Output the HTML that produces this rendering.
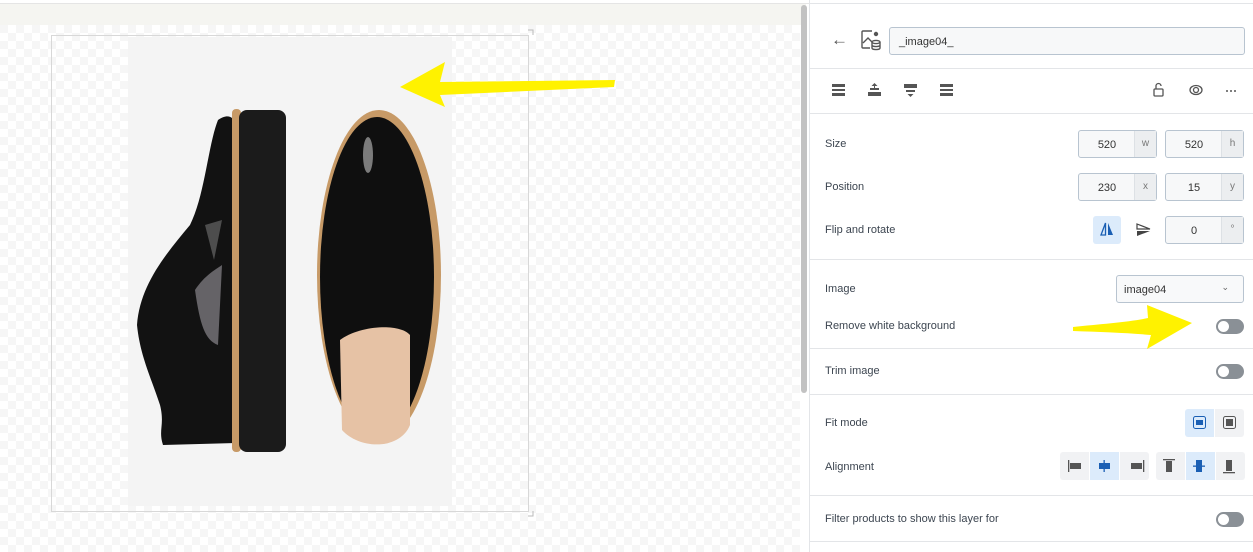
<!DOCTYPE html>
<html><head><meta charset="utf-8"><style>
*{box-sizing:border-box;margin:0;padding:0}
body{width:1253px;height:552px;overflow:hidden;background:#fff;font-family:"Liberation Sans",sans-serif;position:relative;color:#3c4550}
.abs{position:absolute}
.lbl{position:absolute;left:825px;font-size:11px;color:#3c4550}
.hr{position:absolute;left:810px;width:443px;height:1px;background:#e3e5e8}
.inp{position:absolute;height:28px;border:1px solid #b8c4d0;border-radius:3px;background:#f7f8f9;font-size:11px;color:#333}
.inp .v{position:absolute;top:8px;text-align:center}
.inp .u{position:absolute;right:0;top:0;height:26px;width:22px;background:#eceef0;border-left:1px solid #dde1e5;font-size:10px;color:#777;text-align:center;padding-top:8px;line-height:10px}
.tog{position:absolute;left:1216px;width:28px;height:15px;border-radius:8px;background:#8a9096}
.tog:after{content:"";position:absolute;left:2px;top:2px;width:11px;height:11px;border-radius:50%;background:#fff}
.btn{position:absolute;width:29px;height:28px;background:#f1f2f4}
.btn.on{background:#dcebfb}
</style></head><body>
<div class="abs" style="left:0;top:3px;width:809px;height:1px;background:#e5e5e5"></div>
<div class="abs" style="left:0;top:4px;width:806px;height:21px;background:#f5f5f1"></div>
<svg class="abs" style="left:0;top:25px" width="800" height="527">
<defs><pattern id="ck" width="16" height="16" patternUnits="userSpaceOnUse"><rect width="16" height="16" fill="#fff"/><rect width="8" height="8" fill="#f6f6f6"/><rect x="8" y="8" width="8" height="8" fill="#f6f6f6"/></pattern></defs>
<rect width="800" height="527" fill="url(#ck)"/>
<rect x="51.5" y="10.5" width="477" height="476" fill="none" stroke="#d8d8d8"/>
<path d="M528 5h5v5M528 491h5v-5" fill="none" stroke="#bbb"/>
<rect x="128" y="12" width="324" height="469" fill="#f4f4f4"/>
<!-- left shoe -->
<path d="M218 95 C228 88 234 92 236 100 L236 418 L163 420 C158 405 165 400 160 380 C150 350 140 330 137 300 C140 260 165 230 190 200 C205 170 208 120 218 95Z" fill="#121212"/>
<path d="M195 265 C205 250 215 245 222 240 L218 320 C205 315 200 300 195 265Z" fill="#9c9aa0" opacity=".6"/>
<path d="M205 200 L222 195 L214 235Z" fill="#888" opacity=".5"/>
<rect x="232" y="84" width="9" height="343" rx="4" fill="#c79a67"/>
<rect x="239" y="85" width="47" height="342" rx="8" fill="#1b1b1b"/>
<!-- right shoe -->
<ellipse cx="379" cy="250" rx="62" ry="165" fill="#c79a67"/>
<ellipse cx="377" cy="252" rx="57" ry="160" fill="#0f0f0f"/>
<path d="M340 315 C360 300 400 298 410 310 L410 400 C400 425 360 425 342 405Z" fill="#e6c2a5"/>
<ellipse cx="368" cy="130" rx="5" ry="18" fill="#aaa" opacity=".7"/>
<path d="M400 62 L445 37 L440 57 L615 55 L614 62 L440 70 L445 82Z" fill="#fff200"/>
</svg>
<div class="abs" style="left:801px;top:5px;width:6px;height:388px;background:#c2c2c2;border-radius:3px"></div>
<div class="abs" style="left:809px;top:0;width:1px;height:552px;background:#e3e5e8"></div>
<div class="hr" style="top:3px"></div>
<div class="abs" style="left:831px;top:30px;font-size:17px;color:#555">←</div>
<svg class="abs" style="left:860px;top:29px" width="22" height="22" fill="none" stroke="#555" stroke-width="1.4"><path d="M12 2H3a1 1 0 0 0-1 1v15a1 1 0 0 0 1 1h7"/><path d="M3 14l5-5 4 4"/><circle cx="16" cy="5" r="1.5" fill="#555"/><ellipse cx="16" cy="13" rx="4" ry="1.6"/><path d="M12 13v6c0 1 2 1.6 4 1.6s4-.6 4-1.6v-6M12 16c0 1 2 1.6 4 1.6s4-.6 4-1.6"/></svg>
<div class="inp" style="left:889px;top:27px;width:356px"><span class="v" style="left:9px">_image04_</span></div>
<div class="hr" style="top:68px"></div>
<svg class="abs" style="left:832px;top:83px" width="130" height="14" fill="#555"><rect x="0" y="1" width="13" height="3"/><rect x="0" y="6" width="13" height="2"/><rect x="0" y="10" width="13" height="3"/>
<g transform="translate(36,0)"><rect x="0" y="9" width="13" height="4"/><rect x="2" y="5" width="9" height="2"/><path d="M6.5 0l-3 3h6z"/><rect x="6" y="2" width="1" height="5"/></g>
<g transform="translate(72,0)"><rect x="0" y="1" width="13" height="4"/><rect x="2" y="7" width="9" height="2"/><path d="M6.5 14l-3-3h6z"/></g>
<g transform="translate(108,0)"><rect x="0" y="1" width="13" height="3"/><rect x="0" y="6" width="13" height="2"/><rect x="0" y="10" width="13" height="3"/></g></svg>
<svg class="abs" style="left:1152px;top:82px" width="90" height="16" fill="none" stroke="#555" stroke-width="1.3"><rect x="2" y="7" width="9" height="7" rx="1"/><path d="M4 7V4a2.5 2.5 0 0 1 5 0"/><ellipse cx="44" cy="8" rx="6" ry="4.5"/><circle cx="44" cy="8" r="2.5"/><g fill="#555" stroke="none"><circle cx="75" cy="9" r="1"/><circle cx="79" cy="9" r="1"/><circle cx="83" cy="9" r="1"/></g></svg>
<div class="hr" style="top:113px"></div>
<div class="lbl" style="top:138px">Size</div>
<div class="inp" style="left:1078px;top:130px;width:79px"><span class="v" style="left:0;width:56px">520</span><span class="u">w</span></div>
<div class="inp" style="left:1165px;top:130px;width:79px"><span class="v" style="left:0;width:56px">520</span><span class="u">h</span></div>
<div class="lbl" style="top:181px">Position</div>
<div class="inp" style="left:1078px;top:173px;width:79px"><span class="v" style="left:0;width:56px">230</span><span class="u">x</span></div>
<div class="inp" style="left:1165px;top:173px;width:79px"><span class="v" style="left:0;width:56px">15</span><span class="u">y</span></div>
<div class="lbl" style="top:224px">Flip and rotate</div>
<div class="btn on" style="left:1093px;top:216px;width:28px;border-radius:3px"></div>
<svg class="abs" style="left:1099px;top:221px" width="16" height="16"><path d="M6.5 2L2 14h4.5z" fill="none" stroke="#1a5fb4" stroke-width="1.3"/><path d="M9 2l5 12H9z" fill="#1a5fb4"/></svg>
<svg class="abs" style="left:1136px;top:223px" width="16" height="14"><path d="M1 1l13 5H1z" fill="none" stroke="#444" stroke-width="1.2"/><path d="M1 8h13L1 13z" fill="#444"/></svg>
<div class="inp" style="left:1165px;top:216px;width:79px"><span class="v" style="left:0;width:56px">0</span><span class="u">°</span></div>
<div class="hr" style="top:259px"></div>
<div class="lbl" style="top:283px">Image</div>
<div class="inp" style="left:1116px;top:275px;width:128px;background:#f8f9fa"><span class="v" style="left:7px">image04</span><span class="abs" style="right:14px;top:6px;font-size:9px;color:#666">⌄</span></div>
<div class="lbl" style="top:320px">Remove white background</div>
<div class="tog" style="top:319px"></div>
<div class="hr" style="top:348px"></div>
<div class="lbl" style="top:365px">Trim image</div>
<div class="tog" style="top:364px"></div>
<div class="hr" style="top:394px"></div>
<div class="lbl" style="top:417px">Fit mode</div>
<div class="btn on" style="left:1185px;top:409px;border-radius:3px 0 0 3px"></div>
<div class="btn" style="left:1215px;top:409px;border-radius:0 3px 3px 0"></div>
<svg class="abs" style="left:1185px;top:409px" width="60" height="28"><rect x="8.5" y="7.5" width="12" height="12" rx="2" fill="none" stroke="#1a5fb4"/><rect x="11" y="11" width="7" height="5" fill="#1a5fb4"/><rect x="38.5" y="7.5" width="12" height="12" rx="2" fill="none" stroke="#555"/><rect x="41" y="10" width="7" height="7" fill="#555"/></svg>
<div class="lbl" style="top:461px">Alignment</div>
<div class="btn" style="left:1060px;top:452px;border-radius:3px 0 0 3px"></div>
<div class="btn on" style="left:1090px;top:452px"></div>
<div class="btn" style="left:1120px;top:452px;border-radius:0 3px 3px 0"></div>
<div class="btn" style="left:1156px;top:452px;border-radius:3px 0 0 3px"></div>
<div class="btn on" style="left:1186px;top:452px"></div>
<div class="btn" style="left:1216px;top:452px;border-radius:0 3px 3px 0"></div>
<svg class="abs" style="left:1060px;top:452px" width="185" height="28" fill="#555"><rect x="8" y="8" width="1.3" height="12"/><rect x="10" y="11" width="11" height="6"/>
<rect x="43.5" y="8" width="1.3" height="12" fill="#1a5fb4"/><rect x="39" y="11" width="11" height="6" fill="#1a5fb4"/>
<rect x="83" y="8" width="1.3" height="12"/><rect x="71" y="11" width="11" height="6"/>
<rect x="103" y="7" width="12" height="1.3"/><rect x="106" y="9" width="6" height="11"/>
<rect x="133" y="13.5" width="12" height="1.3" fill="#1a5fb4"/><rect x="136" y="8" width="6" height="12" fill="#1a5fb4"/>
<rect x="163" y="20" width="12" height="1.3"/><rect x="166" y="8" width="6" height="11"/></svg>
<div class="hr" style="top:495px"></div>
<div class="lbl" style="top:513px">Filter products to show this layer for</div>
<div class="tog" style="top:512px"></div>
<div class="hr" style="top:541px"></div>
<svg class="abs" style="left:1070px;top:300px" width="130" height="55"><path d="M3 27 C30 24 60 22 78 18 L77 5 L122 23 L77 49 L81 35 C60 33 30 32 3 31Z" fill="#fff200"/></svg>
</body></html>
